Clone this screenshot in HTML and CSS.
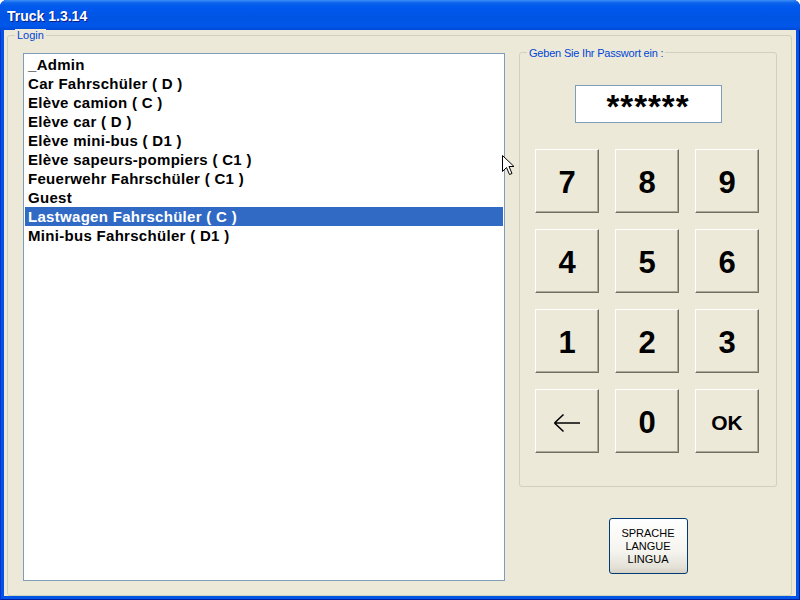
FILE: index.html
```html
<!DOCTYPE html>
<html lang="de">
<head>
  <meta charset="UTF-8">
  <title>Truck 1.3.14</title>
  <link rel="stylesheet" href="styles.css">
</head>
<body>
  <div class="window">
    <div class="titlebar">
      <span class="title">Truck 1.3.14</span>
    </div>

    <div class="client">
      <div class="group login">
        <span class="group-label">Login</span>

        <ul class="listbox">
          <li>_Admin</li>
          <li>Car Fahrschüler ( D )</li>
          <li>Elève camion ( C )</li>
          <li>Elève car ( D )</li>
          <li>Elève mini-bus ( D1 )</li>
          <li>Elève sapeurs-pompiers ( C1 )</li>
          <li>Feuerwehr Fahrschüler ( C1 )</li>
          <li>Guest</li>
          <li class="selected">Lastwagen Fahrschüler ( C )</li>
          <li>Mini-bus Fahrschüler ( D1 )</li>
        </ul>

        <div class="side">
          <div class="group pin">
            <span class="group-label">Geben Sie Ihr Passwort ein :</span>
            <div class="pwd">******</div>
            <div class="keypad">
              <button class="key">7</button>
              <button class="key">8</button>
              <button class="key">9</button>
              <button class="key">4</button>
              <button class="key">5</button>
              <button class="key">6</button>
              <button class="key">1</button>
              <button class="key">2</button>
              <button class="key">3</button>
              <button class="key">
                <svg width="28" height="20" viewBox="0 0 28 20">
                  <path d="M1.5 10 H27 M1.5 10 L10.5 1.5 M1.5 10 L10.5 18.5" fill="none" stroke="#000" stroke-width="1.6"/>
                </svg>
              </button>
              <button class="key">0</button>
              <button class="key ok">OK</button>
            </div>
          </div>

          <button class="lang">SPRACHE<br>LANGUE<br>LINGUA</button>
        </div>
      </div>
    </div>

    <!-- mouse pointer -->
    <svg class="cursor" width="13" height="21" viewBox="0 0 13 21">
      <path d="M0.5 0.5 L0.5 16.5 L4.5 12.5 L7.5 19.5 L10 18.5 L7 11.5 L12 11.5 Z" fill="#fff" stroke="#000" stroke-width="1"/>
    </svg>
  </div>
</body>
</html>
```

FILE: styles.css
```css
body {
  margin: 0;
  background: #fff;
  font-family: "Liberation Sans", Arial, sans-serif;
}

.window {
  position: relative;
  width: 800px;
  height: 600px;
  display: flex;
  flex-direction: column;
  background: #0055e5;
  border-radius: 7px 7px 0 0;
  overflow: hidden;
  box-shadow: inset 1px 0 #0831d9, inset -1px 0 #001ea0, inset 0 -1px #001ea0;
}

.titlebar {
  height: 30px;
  display: flex;
  align-items: center;
  padding-left: 7px;
  background: linear-gradient(to bottom, #3d8ff7 0, #0a62ec 3px, #0058ee 7px, #0054e3 18px, #0057ea 26px, #0049d6 30px);
}

.title {
  color: #fff;
  font-weight: bold;
  font-size: 14px;
  margin-top: 2px;
  text-shadow: 1px 1px #0f1c89;
}

.client {
  flex: 1;
  margin: 0 4px 4px 4px;
  padding: 5px 4px 0 3px;
  background: #ece9d8;
  display: flex;
}

.group {
  position: relative;
  border: 1px solid #d0d0bf;
  border-radius: 3px;
  box-sizing: border-box;
}

.group-label {
  position: absolute;
  top: -7px;
  left: 7px;
  padding: 0 2px;
  background: #ece9d8;
  color: #0046d5;
  font-size: 11px;
  line-height: 13px;
}

.login {
  flex: 1;
  display: flex;
  gap: 14px;
  padding: 16px 14px 14px 15px;
}

.listbox {
  width: 482px;
  height: 528px;
  box-sizing: border-box;
  margin: 1px 0 0 0;
  padding: 1px;
  list-style: none;
  background: #fff;
  border: 1px solid #7f9db9;
}

.listbox li {
  height: 19px;
  line-height: 19px;
  padding-left: 3px;
  font-size: 15px;
  font-weight: bold;
  letter-spacing: 0.3px;
  color: #000;
  white-space: nowrap;
}

.listbox li.selected {
  background: #316ac5;
  color: #fff;
}

.side {
  width: 258px;
  display: flex;
  flex-direction: column;
  align-items: center;
}

.pin {
  width: 258px;
  height: 435px;
  padding-top: 32px;
  display: flex;
  flex-direction: column;
  align-items: center;
}

.pin .group-label {
  top: -6px;
  letter-spacing: -0.2px;
}

.pwd {
  width: 147px;
  height: 38px;
  box-sizing: border-box;
  padding-top: 6px;
  border: 1px solid #7f9db9;
  background: #fff;
  text-align: center;
  font-size: 33px;
  font-weight: bold;
  line-height: 30px;
  letter-spacing: 1px;
}

.keypad {
  margin-top: 26px;
  margin-left: -2px;
  display: grid;
  grid-template-columns: repeat(3, 64px);
  grid-auto-rows: 64px;
  gap: 16px;
}

.key {
  display: flex;
  align-items: center;
  justify-content: center;
  padding: 3px 0 0 0;
  background: #ece9d8;
  border: 1px solid;
  border-color: #fff #716f64 #716f64 #fff;
  box-shadow: inset -1px -1px #aca899;
  font-family: "Liberation Sans", Arial, sans-serif;
  font-size: 31px;
  font-weight: bold;
  color: #000;
}

.key.ok {
  font-size: 21px;
}

.lang {
  margin-top: 31px;
  width: 79px;
  height: 56px;
  padding: 0;
  border: 1px solid #003c74;
  border-radius: 3px;
  background: linear-gradient(to bottom, #fff 0, #f5f4ef 60%, #e3e0d6 90%, #d6d0c5 100%);
  font-family: "Liberation Sans", Arial, sans-serif;
  font-size: 11px;
  line-height: 13px;
  color: #000;
}

.cursor {
  position: absolute;
  left: 502px;
  top: 155px;
}
```
